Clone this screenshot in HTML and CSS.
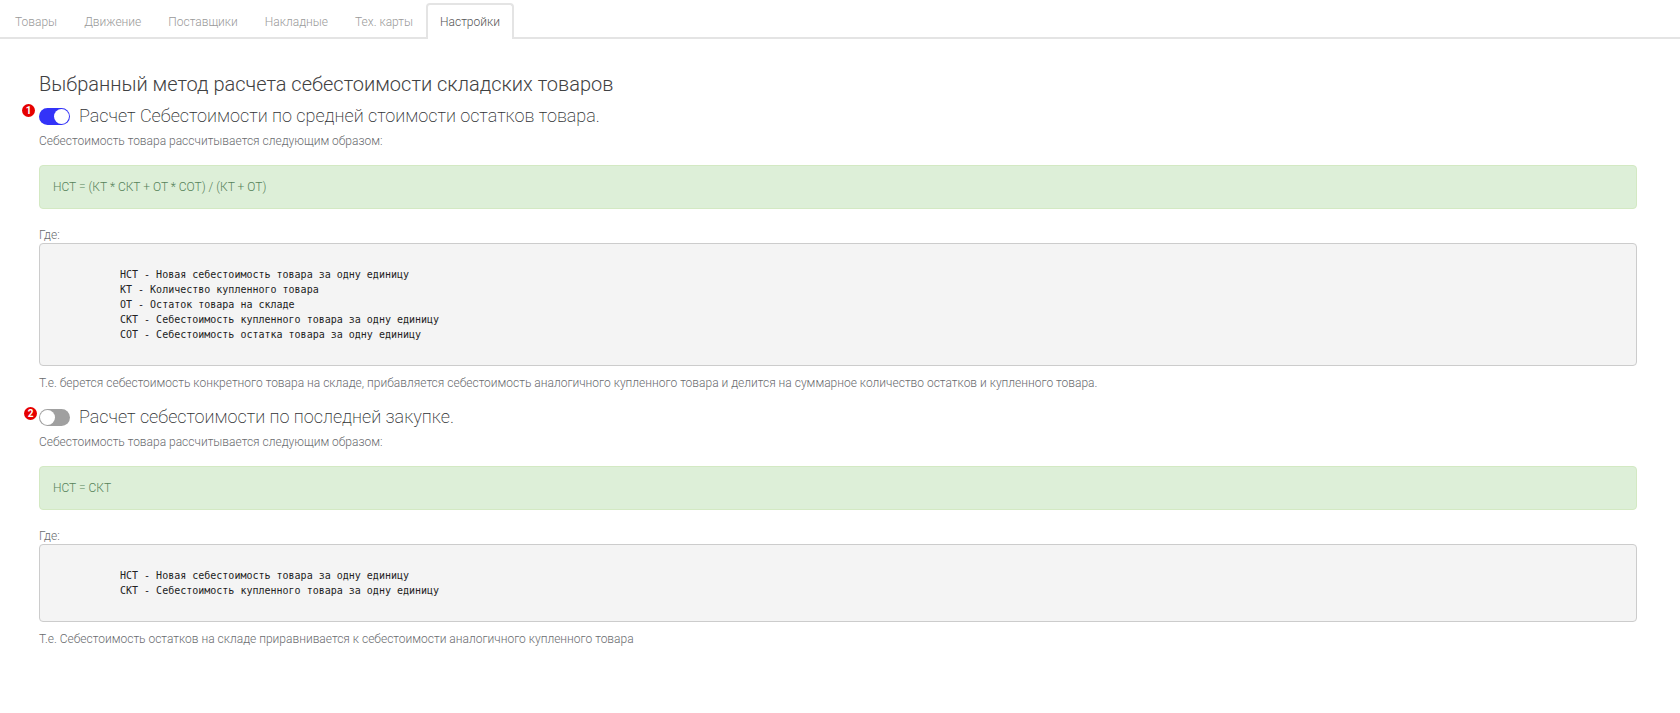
FILE: index.html
```html
<!DOCTYPE html>
<html lang="ru">
<head>
<meta charset="utf-8">
<title>Настройки</title>
<link rel="stylesheet" href="styles.css">
</head>
<body>
<nav class="tabs">
  <a class="tab" href="#goods">Товары</a>
  <a class="tab" href="#moves">Движение</a>
  <a class="tab" href="#suppliers">Поставщики</a>
  <a class="tab" href="#invoices">Накладные</a>
  <a class="tab" href="#cards">Тех. карты</a>
  <a class="tab tab-active" href="#settings" aria-current="page">Настройки</a>
</nav>
<main class="content">
  <h1 class="title">Выбранный метод расчета себестоимости складских товаров</h1>

  <section class="method">
    <div class="method-head">
      <span class="badge badge-first">1</span>
      <input class="switch" type="checkbox" id="average" checked>
      <label class="method-name" for="average">Расчет Себестоимости по средней стоимости остатков товара.</label>
    </div>
    <p class="text">Себестоимость товара рассчитывается следующим образом:</p>
    <div class="formula">НСТ = (КТ * СКТ + ОТ * СОТ) / (КТ + ОТ)</div>
    <p class="text">Где:</p>
    <pre class="legend">НСТ - Новая себестоимость товара за одну единицу
КТ - Количество купленного товара
ОТ - Остаток товара на складе
СКТ - Себестоимость купленного товара за одну единицу
СОТ - Себестоимость остатка товара за одну единицу</pre>
    <p class="text">Т.е. берется себестоимость конкретного товара на складе, прибавляется себестоимость аналогичного купленного товара и делится на суммарное количество остатков и купленного товара.</p>
  </section>

  <section class="method">
    <div class="method-head">
      <span class="badge">2</span>
      <input class="switch" type="checkbox" id="last">
      <label class="method-name" for="last">Расчет себестоимости по последней закупке.</label>
    </div>
    <p class="text">Себестоимость товара рассчитывается следующим образом:</p>
    <div class="formula">НСТ = СКТ</div>
    <p class="text">Где:</p>
    <pre class="legend">НСТ - Новая себестоимость товара за одну единицу
СКТ - Себестоимость купленного товара за одну единицу</pre>
    <p class="text">Т.е. Себестоимость остатков на складе приравнивается к себестоимости аналогичного купленного товара</p>
  </section>
</main>
</body>
</html>
```
FILE: styles.css
```css
* {
  box-sizing: border-box;
}

body {
  margin: 0;
  background: #fff;
  color: #6a6c6f;
  font-family: Roboto, "Open Sans", sans-serif;
  font-size: 12px;
  font-weight: 300;
  line-height: 18px;
}

.tabs {
  display: flex;
  padding: 3px 1px 0;
  border-bottom: 2px solid #e4e4e4;
}

.tab {
  margin: 0 -1px -2px 0;
  padding: 8px 12px;
  border: 2px solid transparent;
  border-bottom: 0;
  border-radius: 4px 4px 0 0;
  color: #9a9a9a;
  text-decoration: none;
}

.tab-active {
  border-color: #e4e4e4;
  background: #fff;
  color: #555;
}

.content {
  padding: 30px 43px 60px 39px;
}

.title {
  margin: 0;
  color: #3f4142;
  font-size: 20px;
  font-weight: 300;
  line-height: 30px;
}

.method {
  margin-bottom: 9px;
}

.method-head {
  position: relative;
  display: flex;
  align-items: center;
  gap: 9px;
  height: 34px;
}

.badge {
  position: absolute;
  top: 7px;
  left: -15px;
  width: 13px;
  height: 13px;
  border-radius: 50%;
  background: #e60000;
  color: #fff;
  font-size: 10px;
  font-weight: 700;
  line-height: 13px;
  text-align: center;
}

.badge-first {
  top: 5px;
  left: -17px;
}

.switch {
  appearance: none;
  width: 31px;
  height: 17px;
  margin: 0;
  padding: 1px;
  border-radius: 9px;
  background: #a0a0a0;
}

.switch::before {
  content: "";
  display: block;
  width: 15px;
  height: 15px;
  border-radius: 50%;
  background: #fff;
}

.switch:checked {
  background: #3333f8;
}

.switch:checked::before {
  margin-left: auto;
}

.method-name {
  color: #2f3133;
  font-size: 18px;
  font-weight: 200;
  line-height: 24px;
}

.text {
  margin: 0;
  line-height: 16px;
}

.formula {
  margin: 16px 0 18px;
  padding: 12px 13px;
  border: 1px solid #d3e9c3;
  border-radius: 4px;
  background: #ddefd8;
  color: #56825a;
}

.legend {
  margin: 0 0 9px;
  padding: 23px 80px;
  border: 1px solid #ccc;
  border-radius: 4px;
  background: #f4f4f4;
  color: #222;
  font-family: "DejaVu Sans Mono", monospace;
  font-size: 10px;
  font-weight: 400;
  line-height: 15px;
}
```
